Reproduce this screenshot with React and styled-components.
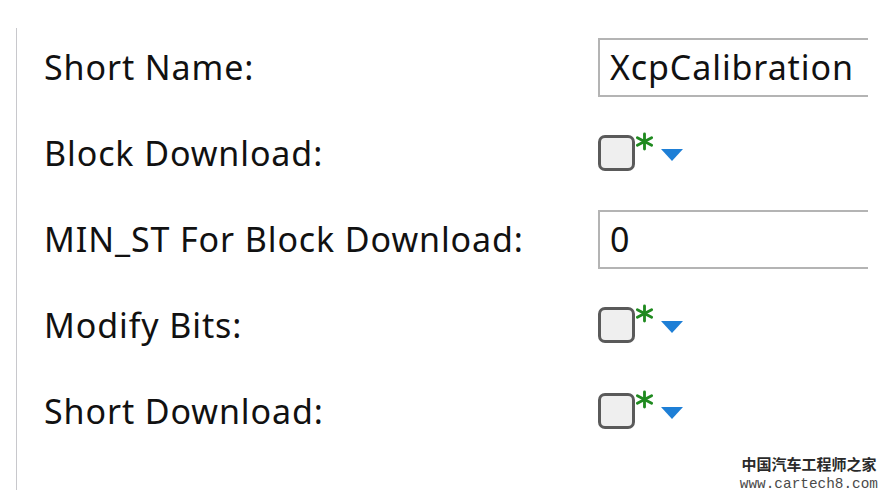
import React from 'react';
import styled, { createGlobalStyle } from 'styled-components';

const GlobalStyle = createGlobalStyle`
  html, body {
    margin: 0;
    padding: 0;
    background: #ffffff;
    overflow: hidden;
  }
  body {
    font-family: "Noto Sans", "Open Sans", sans-serif;
  }
`;

const Page = styled.div`
  position: relative;
  width: 888px;
  height: 499px;
  background: #fff;
  overflow: hidden;
`;

const Panel = styled.div`
  margin: 28px 0 0 16px;
  width: 852px;
  height: 462px;
  border-left: 1px solid #c8c8cc;
  overflow: hidden;
  box-sizing: border-box;
`;

const Form = styled.div`
  display: grid;
  grid-template-columns: 554px 1fr;
  grid-auto-rows: 86px;
  margin-top: -4px;
  padding-left: 27px;
`;

const Label = styled.div`
  display: flex;
  align-items: center;
  font-size: 34px;
  letter-spacing: 0.9px;
  color: #111;
  white-space: nowrap;
`;

const Field = styled.div`
  display: flex;
  align-items: center;
`;

const TextBox = styled.div`
  box-sizing: border-box;
  width: 400px;
  height: 59px;
  border: 2px solid #b4b4b4;
  display: flex;
  align-items: center;
  padding-left: 10px;
  font-size: 34px;
  letter-spacing: 0.9px;
  color: #111;
  white-space: nowrap;
`;

const CheckWrap = styled.div`
  display: flex;
  align-items: flex-start;
  margin-top: 0px;
`;

const Check = styled.div`
  box-sizing: border-box;
  width: 37px;
  height: 36px;
  border: 3px solid #5a5a5a;
  border-radius: 7px;
  background: #efefef;
`;

const Star = styled.svg`
  width: 19px;
  height: 19px;
  margin-top: -3px;
`;

const Caret = styled.svg`
  width: 22px;
  height: 12px;
  margin: 14px 0 0 7px;
`;

const Watermark = styled.div`
  position: absolute;
  right: 10px;
  bottom: 6px;
  display: flex;
  flex-direction: column;
  align-items: center;
  color: #4a4a4a;
`;

const WmTitle = styled.div`
  font-family: "Noto Sans CJK SC", sans-serif;
  font-weight: 700;
  font-size: 15px;
  line-height: 22px;
  color: #2a2a2a;
`;

const WmUrl = styled.div`
  font-family: "Liberation Mono", monospace;
  font-size: 14.4px;
  line-height: 18px;
`;

const Checkbox = () => (
  <CheckWrap>
    <Check />
    <Star viewBox="0 0 20 20">
      <g stroke="#1f8a1f" strokeWidth="3" strokeLinecap="round">
        <line x1="10" y1="2" x2="10" y2="18" />
        <line x1="2.5" y1="6" x2="17.5" y2="14" />
        <line x1="2.5" y1="14" x2="17.5" y2="6" />
      </g>
    </Star>
    <Caret viewBox="0 0 22 12">
      <polygon points="0,0 22,0 11,12" fill="#1e7fd6" />
    </Caret>
  </CheckWrap>
);

const rows = [
  { label: 'Short Name:', type: 'text', value: 'XcpCalibration' },
  { label: 'Block Download:', type: 'check' },
  { label: 'MIN_ST For Block Download:', type: 'text', value: '0' },
  { label: 'Modify Bits:', type: 'check' },
  { label: 'Short Download:', type: 'check' },
];

export default function App() {
  return (
    <Page>
      <GlobalStyle />
      <Panel>
        <Form>
          {rows.map((r) => (
            <React.Fragment key={r.label}>
              <Label>{r.label}</Label>
              <Field>
                {r.type === 'text' ? <TextBox>{r.value}</TextBox> : <Checkbox />}
              </Field>
            </React.Fragment>
          ))}
        </Form>
      </Panel>
      <Watermark>
        <WmTitle>中国汽车工程师之家</WmTitle>
        <WmUrl>www.cartech8.com</WmUrl>
      </Watermark>
    </Page>
  );
}
